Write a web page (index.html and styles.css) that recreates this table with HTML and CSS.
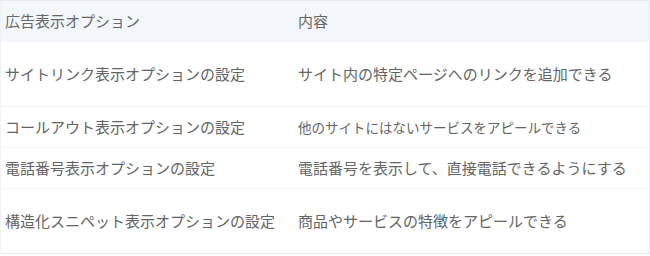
FILE: index.html
```html
<!DOCTYPE html>
<html lang="ja">
<head>
<meta charset="utf-8">
<link rel="stylesheet" href="styles.css">
</head>
<body>
<table class="opt-table">
  <thead>
    <tr class="head-row">
      <th class="col-name">広告表示オプション</th>
      <th class="col-desc">内容</th>
    </tr>
  </thead>
  <tbody>
    <tr class="row row-tall">
      <td>サイトリンク表示オプションの設定</td>
      <td>サイト内の特定ページへのリンクを追加できる</td>
    </tr>
    <tr class="row">
      <td>コールアウト表示オプションの設定</td>
      <td class="small">他のサイトにはないサービスをアピールできる</td>
    </tr>
    <tr class="row">
      <td>電話番号表示オプションの設定</td>
      <td>電話番号を表示して、直接電話できるようにする</td>
    </tr>
    <tr class="row row-tall">
      <td>構造化スニペット表示オプションの設定</td>
      <td>商品やサービスの特徴をアピールできる</td>
    </tr>
  </tbody>
</table>
</body>
</html>
```
FILE: styles.css
```css
html, body {
  margin: 0;
  padding: 0;
  background: #ffffff;
}
body {
  font-family: "Noto Sans CJK JP", "Noto Sans", sans-serif;
  color: #646464;
}
.opt-table {
  width: 650px;
  border-collapse: collapse;
  border-top: 1px solid #e6eaf1;
  border-right: 1px solid #e6eaf1;
  border-left: 1px solid #f0f2f6;
  border-bottom: 1px solid #e6eaf1;
  table-layout: fixed;
}
.opt-table th,
.opt-table td {
  text-align: left;
  font-weight: 400;
  font-size: 15px;
  line-height: 20px;
  padding: 0 0 0 4px;
  vertical-align: middle;
  white-space: nowrap;
}
.col-name {
  width: 288px;
}
.opt-table td + td,
.opt-table th + th {
  padding-left: 5px;
}
.head-row {
  height: 41px;
  background: #f3f6fa;
}
.head-row th {
  color: #666666;
}
.row {
  height: 41px;
  border-top: 1px solid #f0f2f5;
}
.row-tall {
  height: 65px;
}
thead + tbody .row:first-child {
  border-top: none;
}
.opt-table td.small {
  font-size: 13.5px;
}
```
